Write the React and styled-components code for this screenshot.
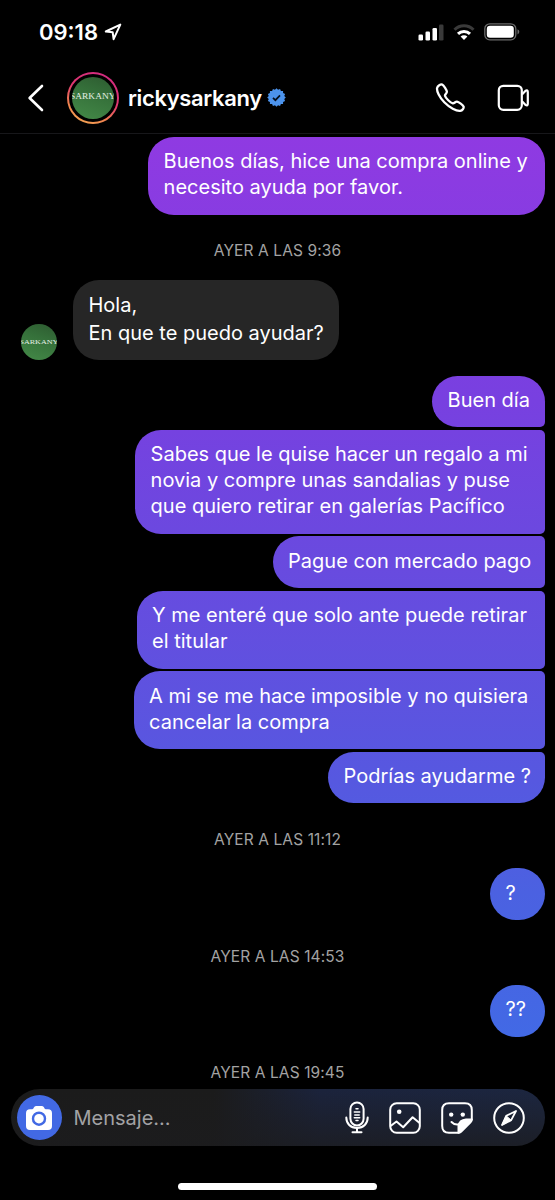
import React from 'react'
import styled, { createGlobalStyle } from 'styled-components';

const GlobalStyle = createGlobalStyle`
  * {
    box-sizing: border-box;
  }
  body {
    margin: 0;
    background: #000;
    font-family: 'Inter', 'Liberation Sans', sans-serif;
    color: #fff;
  }
`;

const Screen = styled.div`
  width: 555px;
  height: 1200px;
  display: flex;
  flex-direction: column;
  overflow: hidden;
  background: #000;
`;

const StatusBar = styled.div`
  height: 62px;
  flex: none;
  display: flex;
  align-items: center;
  justify-content: space-between;
  padding: 2px 35px 0 39px;
`;

const Clock = styled.div`
  display: flex;
  align-items: center;
  gap: 6px;
  font-size: 22px;
  font-weight: 600;
  letter-spacing: ${props => props.$spacing || '0'};
`;

const StatusIcons = styled.div`
  display: flex;
  align-items: center;
  gap: 9px;
`;

const Header = styled.div`
  height: 72px;
  flex: none;
  display: flex;
  align-items: center;
  border-bottom: 1px solid #17171a;
  padding: 0 25px 0 27px;
`;

const BackIcon = styled.svg`
  flex: none;
  margin-right: 22px;
`;

const StoryRing = styled.div`
  width: 52px;
  height: 52px;
  flex: none;
  padding: 2px;
  border-radius: 50%;
  background: linear-gradient(205deg, #d22b80 10%, #e0386f 45%, #f0814f 72%, #f8b955 100%);
`;

const RingGap = styled.div`
  width: 48px;
  height: 48px;
  padding: 3px;
  border-radius: 50%;
  background: #000;
`;

const Avatar = styled.div`
  width: ${props => props.$size}px;
  height: ${props => props.$size}px;
  flex: none;
  display: flex;
  align-items: center;
  justify-content: center;
  overflow: hidden;
  border-radius: 50%;
  background: linear-gradient(200deg, #2d5a30 0%, #35703a 40%, #448a48 100%);
`;

const Brand = styled.span`
  font-family: 'Liberation Serif', serif;
  font-size: ${props => props.$font}px;
  line-height: 1;
  color: #e4efe4;
  transform: scaleX(1.15);
`;

const UserName = styled.div`
  margin-left: 9px;
  font-size: 22px;
  font-weight: 600;
  letter-spacing: -0.35px;
  white-space: nowrap;
`;

const Badge = styled.svg`
  flex: none;
  margin-left: 5px;
`;

const HeaderActions = styled.div`
  margin-left: auto;
  display: flex;
  align-items: center;
  gap: 32px;
`;

const Chat = styled.div`
  height: 955px;
  flex: none;
  display: flex;
  flex-direction: column;
  padding: 3px 10.5px 0 21px;
`;

const TimeLabel = styled.div`
  height: 65px;
  flex: none;
  display: flex;
  align-items: center;
  justify-content: center;
  padding: 7px 0 0 0;
  margin-right: 10.5px;
  font-size: 15.5px;
  letter-spacing: 0.1px;
  color: #a3a3a3;
`;

const Group = styled.div`
  flex: none;
  display: flex;
  flex-direction: column;
  align-items: flex-end;
  gap: 2.8px;
`;

const Bubble = styled.div`
  width: ${props => props.$w}px;
  padding: 12.3px 0 13.5px 15.6px;
  border-radius: ${props => props.$radius || '26px'};
  font-size: 20px;
  line-height: 25.9px;
  white-space: nowrap;
  background: linear-gradient(
    180deg,
    #8f3ae2 137px,
    #7840e0 400px,
    #694adf 560px,
    #5658e0 780px,
    #4b61e1 893px,
    #4269e5 1036px
  ) fixed;
`;

const Line = styled.div`
  letter-spacing: ${props => props.$ls || 0}px;
`;

const ReceivedRow = styled.div`
  flex: none;
  display: flex;
  align-items: flex-end;
  gap: 16px;
  margin-bottom: 15.5px;
`;

const ReceivedBubble = styled.div`
  width: 265.5px;
  height: 80.5px;
  padding: 11px 0 0 15.5px;
  border-radius: 26px;
  background: #262626;
  font-size: 20px;
  line-height: 28.5px;
  white-space: nowrap;
`;

const Composer = styled.div`
  height: 57px;
  flex: none;
  display: flex;
  align-items: center;
  margin: 0 10.5px;
  padding: 0 20px 0 6px;
  border-radius: 29px;
  background: linear-gradient(180deg, rgba(28, 28, 30, 0) 0%, rgba(28, 28, 30, 0.75) 100%),
    linear-gradient(90deg, #1b1b1b 38%, #1b233c 58%, #1c2640 100%);
`;

const CameraButton = styled.div`
  width: 45px;
  height: 45px;
  display: flex;
  align-items: center;
  justify-content: center;
  border-radius: 50%;
  background: #4269e4;
`;

const Placeholder = styled.div`
  margin-left: 12px;
  font-size: 20px;
  color: #a2a2a4;
  letter-spacing: 0;
`;

const Tools = styled.div`
  margin-left: auto;
  display: flex;
  align-items: center;
  gap: 20px;
`;

const HomeIndicator = styled.div`
  width: 199px;
  height: 6.5px;
  margin: 37px auto 0;
  border-radius: 4px;
  background: #fff;
`;

const FIRST = '26px 26px 5px 26px';
const MIDDLE = '26px 5px 5px 26px';
const LAST = '26px 5px 26px 26px';

const messages = [
  { w: 112.5, radius: FIRST, lines: [['Buen día', 0]] },
  {
    w: 409.5,
    radius: MIDDLE,
    lines: [
      ['Sabes que le quise hacer un regalo a mi', 0],
      ['novia y compre unas sandalias y puse', 0],
      ['que quiero retirar en galerías Pacífico', 0],
    ],
  },
  { w: 272, radius: MIDDLE, lines: [['Pague con mercado pago', 0]] },
  { w: 408, radius: MIDDLE, lines: [['Y me enteré que solo ante puede retirar', 0], ['el titular', 0]] },
  { w: 411, radius: MIDDLE, lines: [['A mi se me hace imposible y no quisiera', 0], ['cancelar la compra', 0]] },
  { w: 216.5, radius: LAST, lines: [['Podrías ayudarme ?', 0]] },
];

const Message = ({ w, radius, lines }) => (
  <Bubble $w={w} $radius={radius}>
    {lines.map(([text, ls]) => <Line key={text} $ls={ls}>{text}</Line>)}
  </Bubble>
);

const badgePoints = Array.from({ length: 32 }, (_, i) => {
  const r = i % 2 ? 7.9 : 9.3;
  const a = (i * Math.PI) / 16;
  return `${(9.5 + r * Math.sin(a)).toFixed(2)},${(9.5 - r * Math.cos(a)).toFixed(2)}`;
}).join(' ');

export default function App() {
  return (
    <Screen>
      <GlobalStyle />
      <StatusBar>
        <Clock>
          09:18
          <svg width="18" height="18" viewBox="0 0 18 18" fill="none" stroke="#fff" strokeWidth="2" strokeLinejoin="round">
            <path d="M16.3 1.6 L1.8 8.5 L8.7 9.3 L9.6 16.2 Z" />
          </svg>
        </Clock>
        <StatusIcons>
          <svg width="26" height="17" viewBox="0 0 26 17" fill="#fff">
            <rect x="0.5" y="10.5" width="4.5" height="6" rx="1.3" />
            <rect x="7.5" y="7.5" width="4.5" height="9" rx="1.3" />
            <rect x="14.5" y="4" width="4.5" height="12.5" rx="1.3" />
            <rect x="21" y="0.5" width="4.5" height="16" rx="1.3" fill="#3a3a3a" />
          </svg>
          <svg width="22" height="17" viewBox="0 0 22 17" fill="none" strokeWidth="3">
            <path d="M1.5 5.8 A13.4 13.4 0 0 1 20.5 5.8" stroke="#3a3a3a" />
            <path d="M5 9.9 A8.5 8.5 0 0 1 17 9.9" stroke="#fff" />
            <path d="M11 16 L7.6 12.6 A4.8 4.8 0 0 1 14.4 12.6 Z" fill="#fff" />
          </svg>
          <svg width="36" height="18" viewBox="0 0 36 18">
            <rect x="0.8" y="0.8" width="31" height="16" rx="5" fill="none" stroke="#6a6a6a" strokeWidth="1.3" />
            <rect x="2.8" y="2.8" width="27" height="12" rx="3.2" fill="#fff" />
            <path d="M33.5 6.2 Q35.3 7 35.3 8.8 Q35.3 10.6 33.5 11.4 Z" fill="#6a6a6a" />
          </svg>
        </StatusIcons>
      </StatusBar>

      <Header>
        <BackIcon width="18" height="28" viewBox="0 0 18 28" fill="none" stroke="#fff" strokeWidth="2.6" strokeLinecap="round" strokeLinejoin="round">
          <path d="M15 2 L2.6 14 L15 26" />
        </BackIcon>
        <StoryRing>
          <RingGap>
            <Avatar $size={42}><Brand $font={8.2}>SARKANY</Brand></Avatar>
          </RingGap>
        </StoryRing>
        <UserName>rickysarkany</UserName>
        <Badge width="19" height="19" viewBox="0 0 19 19">
          <polygon points={badgePoints} fill="#4c93ec" />
          <path d="M6 9.8 L8.4 12.2 L13 7.4" fill="none" stroke="#05101f" strokeWidth="1.7" />
        </Badge>
        <HeaderActions>
          <svg width="30" height="30" viewBox="0 0 30 30" fill="none" stroke="#fff" strokeWidth="2.3" strokeLinejoin="round">
            <path d="M7.2 1.6 C5.6 1 2.6 2.8 2.1 5 C1.5 8.3 4.5 14.4 9.3 19.3 C14.4 24.5 21.5 28.4 25.2 27.9 C27.4 27.6 29 25.2 28.6 23.6 C28.2 22 23.6 18.8 22 18.6 C20.3 18.4 19.4 20.6 17.8 20.4 C15.5 20 10.5 15 10 12.8 C9.6 11.2 12 10.3 11.9 8.8 C11.8 7.2 8.8 2.2 7.2 1.6 Z" />
          </svg>
          <svg width="33" height="28" viewBox="0 0 33 28" fill="none" stroke="#fff" strokeWidth="2.2" strokeLinejoin="round">
            <rect x="1.8" y="1.8" width="23" height="24" rx="4.5" />
            <path d="M25 10.5 L28.6 6.7 Q30.8 5.6 30.8 8 L30.8 19.8 Q30.8 22 28.6 21 L25 17.2" />
          </svg>
        </HeaderActions>
      </Header>

      <Chat>
        <Group>
          <Message w={396.5} lines={[['Buenos días, hice una compra online y', 0], ['necesito ayuda por favor.', 0]]} />
        </Group>
        <TimeLabel>AYER A LAS 9:36</TimeLabel>

        <ReceivedRow>
          <Avatar $size={36}><Brand $font={7}>SARKANY</Brand></Avatar>
          <ReceivedBubble>
            <Line>Hola,</Line>
            <Line>En que te puedo ayudar?</Line>
          </ReceivedBubble>
        </ReceivedRow>

        <Group>
          {messages.map(m => <Message key={m.lines[0][0]} {...m} />)}
        </Group>
        <TimeLabel>AYER A LAS 11:12</TimeLabel>
        <Group>
          <Message w={54.5} lines={[['?', 0]]} />
        </Group>
        <TimeLabel>AYER A LAS 14:53</TimeLabel>
        <Group>
          <Message w={54.5} lines={[['??', 0]]} />
        </Group>
        <TimeLabel>AYER A LAS 19:45</TimeLabel>
      </Chat>

      <Composer>
        <CameraButton>
          <svg width="28" height="26" viewBox="0 0 28 26">
            <path d="M5 4.2 H7.3 C8.6 4.2 9 1 11 1 H17 C19 1 19.4 4.2 20.7 4.2 H23 Q27 4.2 27 8.2 V21 Q27 25 23 25 H5 Q1 25 1 21 V8.2 Q1 4.2 5 4.2 Z" fill="#fff" />
            <circle cx="14" cy="13.7" r="6" fill="none" stroke="#4269e4" strokeWidth="2.4" />
          </svg>
        </CameraButton>
        <Placeholder>Mensaje...</Placeholder>
        <Tools>
          <svg width="24" height="33" viewBox="0 0 24 33" fill="none" stroke="#fff" strokeWidth="2" strokeLinecap="round">
            <rect x="5.4" y="1.4" width="13.2" height="23" rx="6.6" />
            <path d="M1.3 16.5 C1.3 22.5 5.5 27 12 27 C18.5 27 22.7 22.5 22.7 16.5" />
            <path d="M12 27 V31 M7.5 31.2 H16.5" />
            <path d="M11 7.7 H13 M9.3 11.1 H14.7 M9.8 14 H14.2 M9.3 16.8 H14.7 M11 19.6 H13" strokeWidth="1.5" />
          </svg>
          <svg width="32" height="32" viewBox="0 0 32 32" fill="none" stroke="#fff" strokeWidth="2" strokeLinejoin="round">
            <rect x="1.2" y="1.2" width="29.6" height="29.6" rx="6.5" />
            <circle cx="10.2" cy="9.7" r="2.3" fill="#fff" stroke="none" />
            <path d="M1.6 24 L7.5 19.5 L14.2 25.2 L23.6 15.2 L30.6 21" />
          </svg>
          <svg width="32" height="32" viewBox="0 0 32 32" fill="none" stroke="#fff" strokeWidth="2" strokeLinecap="round" strokeLinejoin="round">
            <path d="M17.5 30.8 H8 Q1.2 30.8 1.2 24 V8 Q1.2 1.2 8 1.2 H24 Q30.8 1.2 30.8 8 V17.5 L17.5 30.8" />
            <path d="M17.5 30.8 V24 Q18.5 18 25 17.5 H30.8 Q30.8 19 29.5 20.3 L20 29.8 Q18.8 30.8 17.5 30.8 Z" fill="#fff" />
            <circle cx="10.2" cy="12.6" r="2.2" fill="#fff" stroke="none" />
            <circle cx="21.8" cy="12.6" r="2.2" fill="#fff" stroke="none" />
            <path d="M10.5 20 Q13.5 23.2 18 22.3" />
          </svg>
          <svg width="32" height="32" viewBox="0 0 32 32" fill="none" stroke="#fff" strokeWidth="2" strokeLinejoin="round">
            <circle cx="16" cy="16" r="14.8" />
            <path d="M23 9 L13.2 13.8 L9 23 L18.2 18.2 Z" strokeWidth="1.8" />
            <path d="M13.2 13.8 L18.2 18.2 L9 23 Z" fill="#fff" strokeWidth="1" />
          </svg>
        </Tools>
      </Composer>
      <HomeIndicator />
    </Screen>
  )
}
